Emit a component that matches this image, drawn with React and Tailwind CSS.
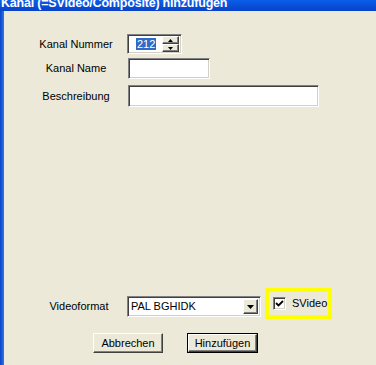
import React from "react";

const sunken =
  "border border-t-[#808080] border-l-[#808080] border-b-white border-r-white shadow-[inset_1px_1px_0_#404040,inset_-1px_-1px_0_#d4d0c8] bg-white";
const raised =
  "border border-t-white border-l-white border-b-[#404040] border-r-[#404040] shadow-[inset_-1px_-1px_0_#808080,inset_1px_1px_0_#ece9d8] bg-[#ece9d8]";

function SpinButton({ up }) {
  return (
    <div className={`${raised} flex-1 flex items-center justify-center`}>
      <svg width="5" height="3" viewBox="0 0 5 3">
        {up ? <path d="M2.5 0 L5 3 L0 3 Z" fill="#000" /> : <path d="M0 0 L5 0 L2.5 3 Z" fill="#000" />}
      </svg>
    </div>
  );
}

function Label({ children }) {
  return <div className="w-[88px] text-center text-black">{children}</div>;
}

export default function App() {
  return (
    <div
      className="w-[376px] h-[365px] overflow-hidden flex flex-col bg-[#ece9d8] text-[11px] leading-[13px]"
      style={{ fontFamily: '"Liberation Sans", Arial, sans-serif' }}
    >
      {/* Titelleiste */}
      <div className="h-[11px] overflow-hidden bg-gradient-to-b from-[#0a5ee9] to-[#0842c8] shrink-0">
        <div
          className="-mt-[4px] pl-[1px] text-white font-bold text-[12.5px] leading-[15px] whitespace-nowrap"
          style={{ fontFamily: '"Liberation Sans", Arial, sans-serif', letterSpacing: "-0.2px" }}
        >
          Kanal (=SVideo/Composite) hinzufügen
        </div>
      </div>

      <div className="flex flex-1">
        {/* linker Fensterrand */}
        <div className="w-[4px] bg-gradient-to-r from-[#0842c8] to-[#2f73e8] shrink-0" />

        <div className="flex-1 flex flex-col pl-[28px]">
          {/* Kanal Nummer */}
          <div className="flex items-center h-[20px] mt-[23px]">
            <Label>Kanal Nummer</Label>
            <div className={`${sunken} ml-[7px] w-[55px] h-[20px] flex items-center pr-[2px]`}>
              <div className="flex-1 pl-[8px]">
                <span className="bg-[#316ac5] text-white px-[1px]">212</span>
              </div>
              <div className="w-[17px] h-[16px] flex flex-col">
                <SpinButton up />
                <SpinButton />
              </div>
            </div>
          </div>

          {/* Kanal Name */}
          <div className="flex items-center h-[21px] mt-[4px]">
            <Label>Kanal Name</Label>
            <div className={`${sunken} ml-[8px] w-[82px] h-[21px]`} />
          </div>

          {/* Beschreibung */}
          <div className="flex items-center h-[22px] mt-[6px]">
            <Label>Beschreibung</Label>
            <div className={`${sunken} ml-[8px] w-[191px] h-[22px]`} />
          </div>

          <div className="flex-1" />

          {/* Videoformat */}
          <div className="flex items-start">
            <div className="w-[94px] text-center mt-[12px]">Videoformat</div>
            <div className={`${sunken} ml-[1px] mt-[8px] w-[134px] h-[21px] flex items-center pl-[3px] pr-[2px]`}>
              <span className="flex-1">PAL BGHIDK</span>
              <div className={`${raised} w-[15px] h-[15px] flex items-center justify-center`}>
                <svg width="7" height="4" viewBox="0 0 7 4">
                  <path d="M0 0 L7 0 L3.5 4 Z" fill="#000" />
                </svg>
              </div>
            </div>
            <div className="ml-[4px] border-[4px] border-[#ffff00] w-[67px] h-[31px] flex items-center pl-[4px]">
              <div className={`${sunken} w-[13px] h-[13px] flex items-center justify-center`}>
                <svg width="9" height="9" viewBox="0 0 9 9">
                  <path d="M1 4 L3.5 6.5 L8 2" stroke="#000" strokeWidth="1.8" fill="none" />
                </svg>
              </div>
              <span className="ml-[6px]">SVideo</span>
            </div>
          </div>

          {/* Buttons */}
          <div className="flex mt-[14px] mb-[12px] ml-[61px] gap-[24px]">
            <button className={`${raised} w-[70px] h-[20px] text-[11px]`}>Abbrechen</button>
            <div className="border border-black">
              <button className={`${raised} w-[69px] h-[18px] text-[11px] block`}>Hinzufügen</button>
            </div>
          </div>
        </div>
      </div>
    </div>
  );
}
